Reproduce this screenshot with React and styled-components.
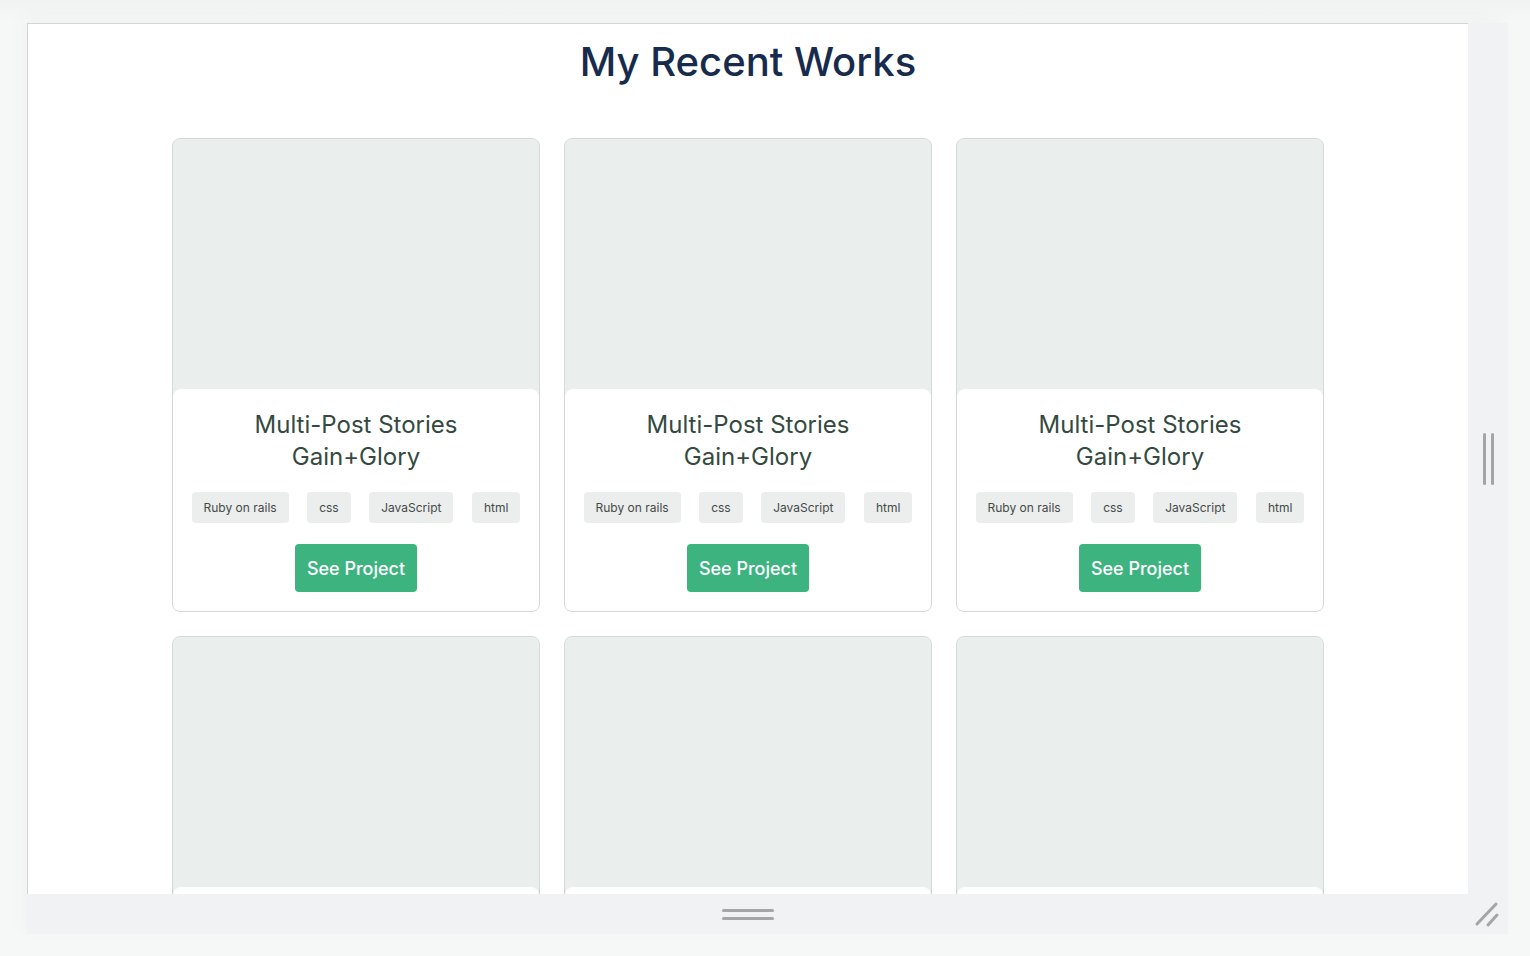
import React from "react";
import styled, { createGlobalStyle } from "styled-components";

const Global = createGlobalStyle`
  html, body { margin: 0; padding: 0; background: #f6f8f7; }
  body { font-family: Inter, "Noto Sans", sans-serif; }
  * { box-sizing: border-box; }
`;

const Page = styled.div`
  width: 1530px;
  height: 956px;
  padding: 23px 0 0 27px;
  background: linear-gradient(180deg, #f1f3f2 0px, #f6f8f7 23px);
`;

const Frame = styled.div`
  width: 1481px;
  height: 911px;
  display: grid;
  grid-template-columns: 1fr 40px;
  grid-template-rows: 871px 40px;
  box-shadow: -6px -6px 20px rgba(0, 0, 0, 0.025);
`;

const Viewport = styled.main`
  background: #ffffff;
  border-top: 1px solid #d3d4d4;
  border-left: 1px solid #d3d4d4;
  overflow: hidden;
  display: flex;
  flex-direction: column;
  align-items: center;
`;

const Heading = styled.h1`
  margin: 14px 0 0;
  font-size: 40px;
  line-height: 48px;
  font-weight: 500;
  color: #172b4d;
`;

const Grid = styled.div`
  margin-top: 52px;
  display: grid;
  grid-template-columns: repeat(3, 368px);
  column-gap: 24px;
  row-gap: 24px;
`;

const Card = styled.article`
  border: 1px solid #d5d9d7;
  border-radius: 8px;
  background: #eaeeed;
  display: flex;
  flex-direction: column;
  overflow: hidden;
`;

const Thumb = styled.div`
  height: 250px;
  background: #eaeeed;
`;

const Body = styled.div`
  background: #ffffff;
  border-radius: 8px 8px 0 0;
  padding: 20px 0 19px;
  display: flex;
  flex-direction: column;
  align-items: center;
`;

const Title = styled.h2`
  margin: 0;
  font-size: 24px;
  line-height: 32px;
  font-weight: 400;
  color: #344a3f;
  text-align: center;
  width: 230px;
`;

const Tags = styled.ul`
  list-style: none;
  margin: 19px 0 0;
  padding: 0;
  width: 100%;
  display: flex;
  justify-content: space-evenly;
`;

const Tag = styled.li`
  height: 31px;
  padding: 0 12px;
  display: flex;
  align-items: center;
  background: #ebeeed;
  border-radius: 4px;
  font-size: 12px;
  color: #444a47;
`;

const Button = styled.button`
  margin-top: 21px;
  height: 48px;
  padding: 0 12px;
  border: none;
  border-radius: 4px;
  background: #3db37f;
  color: #ffffff;
  font-family: Inter, sans-serif;
  font-size: 18px;
  font-weight: 500;
  cursor: pointer;
`;

const SidePanel = styled.aside`
  background: #f1f2f4;
  display: flex;
  align-items: center;
  justify-content: center;
`;

const VHandle = styled.div`
  display: flex;
  gap: 5px;
  & > span {
    width: 3px;
    height: 52px;
    border-radius: 2px;
    background: #a5a5a5;
  }
`;

const BottomBar = styled.footer`
  grid-column: 1 / 3;
  background: #f1f2f4;
  display: grid;
  grid-template-columns: 1fr 40px;
  align-items: center;
`;

const HHandle = styled.div`
  justify-self: center;
  display: flex;
  flex-direction: column;
  gap: 5px;
  & > span {
    width: 52px;
    height: 3px;
    border-radius: 2px;
    background: #a5a5a5;
  }
`;

const Resize = styled.svg`
  justify-self: center;
`;

const tags = ["Ruby on rails", "css", "JavaScript", "html"];

function ProjectCard() {
  return (
    <Card>
      <Thumb />
      <Body>
        <Title>Multi-Post Stories Gain+Glory</Title>
        <Tags>
          {tags.map((t) => (
            <Tag key={t}>{t}</Tag>
          ))}
        </Tags>
        <Button>See Project</Button>
      </Body>
    </Card>
  );
}

export default function App() {
  return (
    <>
      <Global />
      <Page>
        <Frame>
          <Viewport>
            <Heading>My Recent Works</Heading>
            <Grid>
              {Array.from({ length: 6 }).map((_, i) => (
                <ProjectCard key={i} />
              ))}
            </Grid>
          </Viewport>
          <SidePanel>
            <VHandle>
              <span />
              <span />
            </VHandle>
          </SidePanel>
          <BottomBar>
            <HHandle>
              <span />
              <span />
            </HHandle>
            <Resize width="28" height="28" viewBox="0 0 28 28">
              <line x1="3" y1="24" x2="22" y2="4" stroke="#a5a5a5" strokeWidth="3" strokeLinecap="round" />
              <line x1="14" y1="25" x2="23" y2="15" stroke="#a5a5a5" strokeWidth="3" strokeLinecap="round" />
            </Resize>
          </BottomBar>
        </Frame>
      </Page>
    </>
  );
}
